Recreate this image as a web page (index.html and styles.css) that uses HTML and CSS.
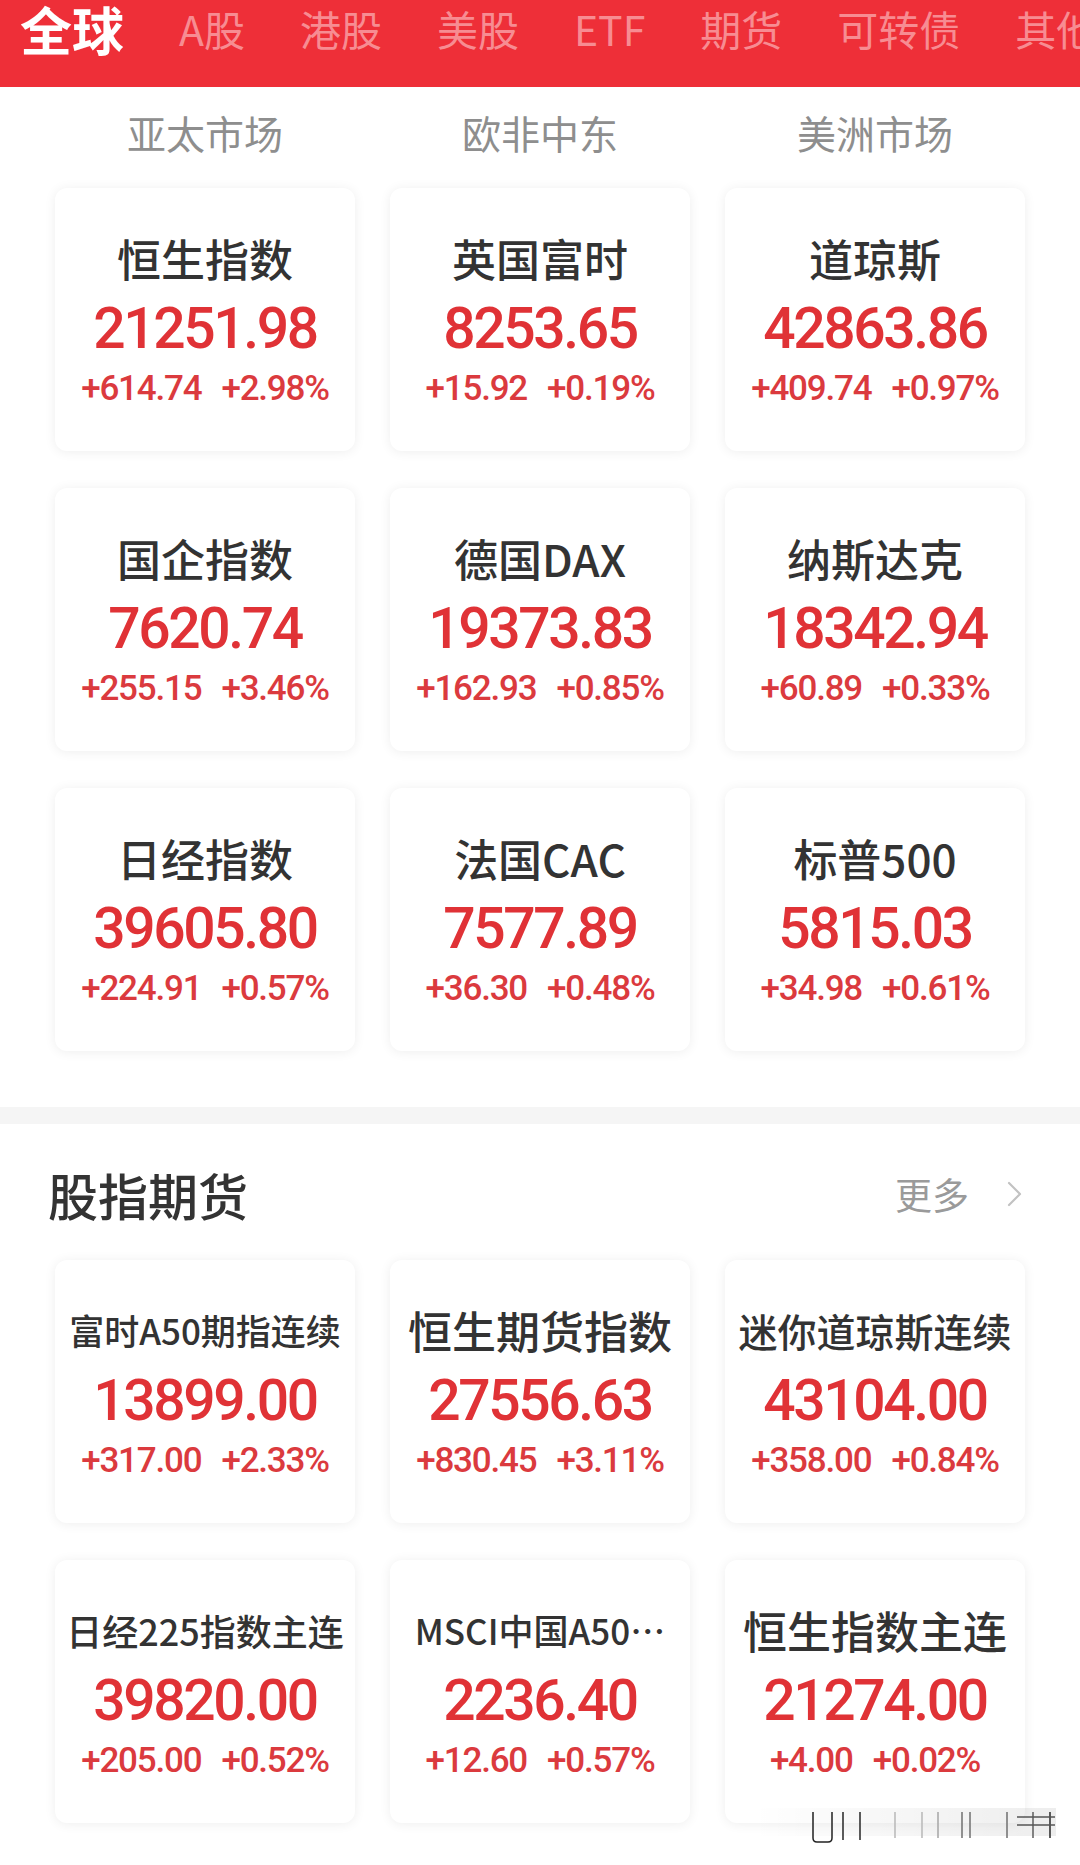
FILE: index.html
```html
<!DOCTYPE html>
<html lang="zh-CN">
<head>
<meta charset="utf-8">
<title>全球市场</title>
<link rel="stylesheet" href="styles.css">
</head>
<body>
<header class="topbar">
  <nav class="tabs">
    <span class="tab active">全球</span>
    <span class="tab">A股</span>
    <span class="tab">港股</span>
    <span class="tab">美股</span>
    <span class="tab">ETF</span>
    <span class="tab">期货</span>
    <span class="tab">可转债</span>
    <span class="tab">其他</span>
  </nav>
</header>

<div class="subtabs grid3">
  <span>亚太市场</span>
  <span>欧非中东</span>
  <span>美洲市场</span>
</div>

<section class="cards grid3">
  <div class="card"><div class="name">恒生指数</div><div class="price">21251.98</div><div class="change"><span>+614.74</span><span>+2.98%</span></div></div>
  <div class="card"><div class="name">英国富时</div><div class="price">8253.65</div><div class="change"><span>+15.92</span><span>+0.19%</span></div></div>
  <div class="card"><div class="name">道琼斯</div><div class="price">42863.86</div><div class="change"><span>+409.74</span><span>+0.97%</span></div></div>

  <div class="card"><div class="name">国企指数</div><div class="price">7620.74</div><div class="change"><span>+255.15</span><span>+3.46%</span></div></div>
  <div class="card"><div class="name">德国DAX</div><div class="price">19373.83</div><div class="change"><span>+162.93</span><span>+0.85%</span></div></div>
  <div class="card"><div class="name">纳斯达克</div><div class="price">18342.94</div><div class="change"><span>+60.89</span><span>+0.33%</span></div></div>

  <div class="card"><div class="name">日经指数</div><div class="price">39605.80</div><div class="change"><span>+224.91</span><span>+0.57%</span></div></div>
  <div class="card"><div class="name">法国CAC</div><div class="price">7577.89</div><div class="change"><span>+36.30</span><span>+0.48%</span></div></div>
  <div class="card"><div class="name">标普500</div><div class="price">5815.03</div><div class="change"><span>+34.98</span><span>+0.61%</span></div></div>
</section>

<div class="divider"></div>

<div class="sec-head">
  <h2 class="sec-title">股指期货</h2>
  <a class="more">更多<svg class="chev" width="15" height="26" viewBox="0 0 15 26"><path d="M2 2 L13 13 L2 24" fill="none" stroke="#c2c2c2" stroke-width="2.2" stroke-linecap="round" stroke-linejoin="round"/></svg></a>
</div>

<section class="cards futures grid3">
  <div class="card"><div class="name sm">富时A50期指连续</div><div class="price">13899.00</div><div class="change"><span>+317.00</span><span>+2.33%</span></div></div>
  <div class="card"><div class="name">恒生期货指数</div><div class="price">27556.63</div><div class="change"><span>+830.45</span><span>+3.11%</span></div></div>
  <div class="card"><div class="name md">迷你道琼斯连续</div><div class="price">43104.00</div><div class="change"><span>+358.00</span><span>+0.84%</span></div></div>

  <div class="card"><div class="name sm2">日经225指数主连</div><div class="price">39820.00</div><div class="change"><span>+205.00</span><span>+0.52%</span></div></div>
  <div class="card"><div class="name sm">MSCI中国A50…</div><div class="price">2236.40</div><div class="change"><span>+12.60</span><span>+0.57%</span></div></div>
  <div class="card"><div class="name">恒生指数主连</div><div class="price">21274.00</div><div class="change"><span>+4.00</span><span>+0.02%</span></div></div>
</section>

<svg class="watermark" width="312" height="42" viewBox="0 0 312 42">
  <defs>
    <linearGradient id="wash" x1="0" x2="1" y1="0" y2="0">
      <stop offset="0" stop-color="#000" stop-opacity="0"/>
      <stop offset="1" stop-color="#000" stop-opacity="0.07"/>
    </linearGradient>
    <linearGradient id="line" x1="0" x2="1" y1="0" y2="0">
      <stop offset="0" stop-color="#000" stop-opacity="0.1"/>
      <stop offset="1" stop-color="#000" stop-opacity="0.55"/>
    </linearGradient>
  </defs>
  <rect x="6" y="4" width="304" height="28" fill="url(#wash)"/>
  <line x1="2" y1="26" x2="309" y2="26" stroke="url(#line)" stroke-width="1.5"/>
  <path d="M67 8 V34 Q67 38 71 38 H82 Q86 38 86 34 V8" fill="none" stroke="#222" stroke-width="1.5"/>
  <g stroke-width="1.6">
    <line x1="97" y1="8" x2="97" y2="36" stroke="#333"/>
    <line x1="114" y1="8" x2="114" y2="36" stroke="#333"/>
    <line x1="149" y1="8" x2="149" y2="34" stroke="#bbb"/>
    <line x1="176" y1="8" x2="176" y2="34" stroke="#bbb"/>
    <line x1="192" y1="8" x2="192" y2="34" stroke="#aaa"/>
    <line x1="216" y1="8" x2="216" y2="34" stroke="#777"/>
    <line x1="224" y1="8" x2="224" y2="34" stroke="#777"/>
    <line x1="261" y1="8" x2="261" y2="34" stroke="#777"/>
    <line x1="287" y1="8" x2="287" y2="34" stroke="#666"/>
    <line x1="304" y1="8" x2="304" y2="34" stroke="#333"/>
    <line x1="271" y1="13" x2="309" y2="13" stroke="#555"/>
    <line x1="271" y1="21" x2="309" y2="21" stroke="#555"/>
  </g>
</svg>
</body>
</html>
```

FILE: styles.css
```css
* {
  box-sizing: border-box;
  margin: 0;
  padding: 0;
}

body {
  margin: 0;
  width: 1080px;
  height: 1865px;
  overflow: hidden;
  position: relative;
  background: #ffffff;
  font-family: "Noto Sans CJK SC", "Noto Sans", sans-serif;
  color: #333333;
}

/* top red tab bar */
.topbar {
  height: 87px;
  background: #ee2f38;
  overflow: hidden;
}

.tabs {
  display: flex;
  align-items: center;
  gap: 55px;
  height: 57px;
  padding-left: 20px;
  white-space: nowrap;
}

.tab {
  flex-shrink: 0;
  font-size: 41px;
  line-height: 57px;
  color: #f78c92;
}

.tab.active {
  font-size: 52px;
  font-weight: 700;
  color: #ffffff;
}

/* shared 3 column grid */
.grid3 {
  display: grid;
  grid-template-columns: repeat(3, 300px);
  column-gap: 35px;
  padding: 0 55px;
}

.subtabs {
  padding-top: 20px;
}

.subtabs span {
  text-align: center;
  font-size: 39px;
  line-height: 50px;
  color: #8e8e8e;
}

.cards {
  row-gap: 37px;
  margin-top: 31px;
}

.card {
  height: 263px;
  background: #ffffff;
  border-radius: 12px;
  box-shadow: 0 1px 12px rgba(0, 0, 0, 0.07);
  padding-top: 40px;
  display: flex;
  flex-direction: column;
  align-items: center;
}

.name {
  font-size: 44px;
  font-weight: 500;
  line-height: 60px;
  color: #333333;
  white-space: nowrap;
}

.name.md {
  font-size: 39px;
}

.name.sm {
  font-size: 35px;
}

.name.sm2 {
  font-size: 36px;
}

.price {
  margin-top: 3px;
  font-family: Roboto, "Noto Sans", sans-serif;
  font-weight: 500;
  font-size: 57px;
  line-height: 76px;
  letter-spacing: -2.4px;
  color: #e03236;
}

.change {
  display: flex;
  gap: 20px;
  font-family: Roboto, "Noto Sans", sans-serif;
  font-weight: 500;
  font-size: 35px;
  line-height: 44px;
  letter-spacing: -1.2px;
  color: #db3a3e;
}

/* section divider */
.divider {
  height: 17px;
  margin-top: 56px;
  background: #f5f5f5;
}

.sec-head {
  display: flex;
  align-items: center;
  justify-content: space-between;
  height: 70px;
  margin-top: 35px;
  padding: 0 58px 0 48px;
}

.sec-title {
  font-size: 50px;
  font-weight: 500;
  line-height: 70px;
  color: #333333;
}

.more {
  display: flex;
  align-items: center;
  gap: 38px;
  font-size: 37px;
  line-height: 70px;
  color: #9a9a9a;
}

.chev {
  display: block;
}

.cards.futures {
  margin-top: 31px;
}

/* screenshot watermark overlay */
.watermark {
  position: absolute;
  left: 746px;
  top: 1804px;
}
```
